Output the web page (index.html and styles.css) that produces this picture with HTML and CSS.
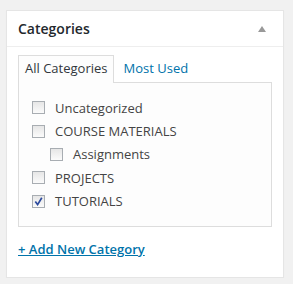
FILE: index.html
```html
<!DOCTYPE html>
<html>
<head>
<meta charset="utf-8">
<link rel="stylesheet" href="styles.css">
</head>
<body>
<div class="box">
  <div class="head">
    <h2 class="title">Categories</h2>
    <span class="toggle"></span>
  </div>
  <div class="inside">
    <ul class="tabs">
      <li class="tab active">All Categories</li>
      <li class="tab"><a href="#">Most Used</a></li>
    </ul>
    <div class="panel">
      <ul class="list">
        <li><label class="item"><span class="cb"></span>Uncategorized</label></li>
        <li><label class="item"><span class="cb"></span>COURSE MATERIALS</label>
          <ul class="children">
            <li><label class="item"><span class="cb"></span>Assignments</label></li>
          </ul>
        </li>
        <li><label class="item"><span class="cb"></span>PROJECTS</label></li>
        <li><label class="item"><span class="cb checked"><svg width="9" height="9" viewBox="0 0 9 9"><path d="M1.3 4.6 L3.6 7.6 L7.8 0.8" fill="none" stroke="#2c4a9e" stroke-width="1.7"/></svg></span>TUTORIALS</label></li>
      </ul>
    </div>
    <a class="add" href="#">+ Add New Category</a>
  </div>
</div>
</body>
</html>
```
FILE: styles.css
```css
html, body {
  margin: 0;
  padding: 0;
  background: #f1f1f1;
  font-family: "Open Sans", "Liberation Sans", sans-serif;
  color: #444;
}
body {
  padding: 10px 9px 0 6px;
}
.box {
  background: #fff;
  border: 1px solid #e5e5e5;
  box-shadow: 0 1px 1px rgba(0,0,0,.04);
  height: 268px;
  box-sizing: border-box;
}
.head {
  height: 35px;
  border-bottom: 1px solid #eee;
  display: flex;
  align-items: center;
  justify-content: space-between;
  padding: 0 17px 0 11px;
}
.title {
  margin: 0;
  font-size: 14px;
  font-weight: 600;
  color: #23282d;
}
.toggle {
  width: 0;
  height: 0;
  border-left: 4px solid transparent;
  border-right: 4px solid transparent;
  border-bottom: 6px solid #999;
  margin-top: 1px;
}
.inside {
  padding: 8px 11px 0 11px;
}
.tabs {
  list-style: none;
  margin: 0;
  padding: 0;
  display: flex;
  align-items: flex-end;
}
.tab {
  font-size: 13px;
  padding: 3px 6px 5px 6px;
  line-height: 18px;
  border: 1px solid transparent;
  border-bottom: 0;
}
.tab.active {
  border-color: #ddd;
  background: #fdfdfd;
  color: #32373c;
  margin-bottom: -1px;
  position: relative;
  padding-bottom: 6px;
}
.tab a {
  color: #0073aa;
  text-decoration: none;
  margin-left: 2px;
}
.panel {
  border: 1px solid #ddd;
  background: #fdfdfd;
  height: 145px;
  padding: 13px 13px 0 13px;
  box-sizing: border-box;
}
.list, .children {
  list-style: none;
  margin: 0;
  padding: 0;
}
.children {
  margin-left: 18px;
}
.item {
  display: flex;
  align-items: center;
  height: 23.4px;
  font-size: 13px;
  color: #444;
}
.cb {
  width: 11px;
  height: 11px;
  border: 1px solid #a8adb2;
  background: linear-gradient(#e6e6e6, #fbfbfb);
  margin-right: 10px;
  display: flex;
  align-items: center;
  justify-content: center;
  box-sizing: content-box;
}
.add {
  display: inline-block;
  margin-top: 13px;
  font-size: 13px;
  font-weight: 600;
  color: #0073aa;
  text-decoration: underline;
}
```
